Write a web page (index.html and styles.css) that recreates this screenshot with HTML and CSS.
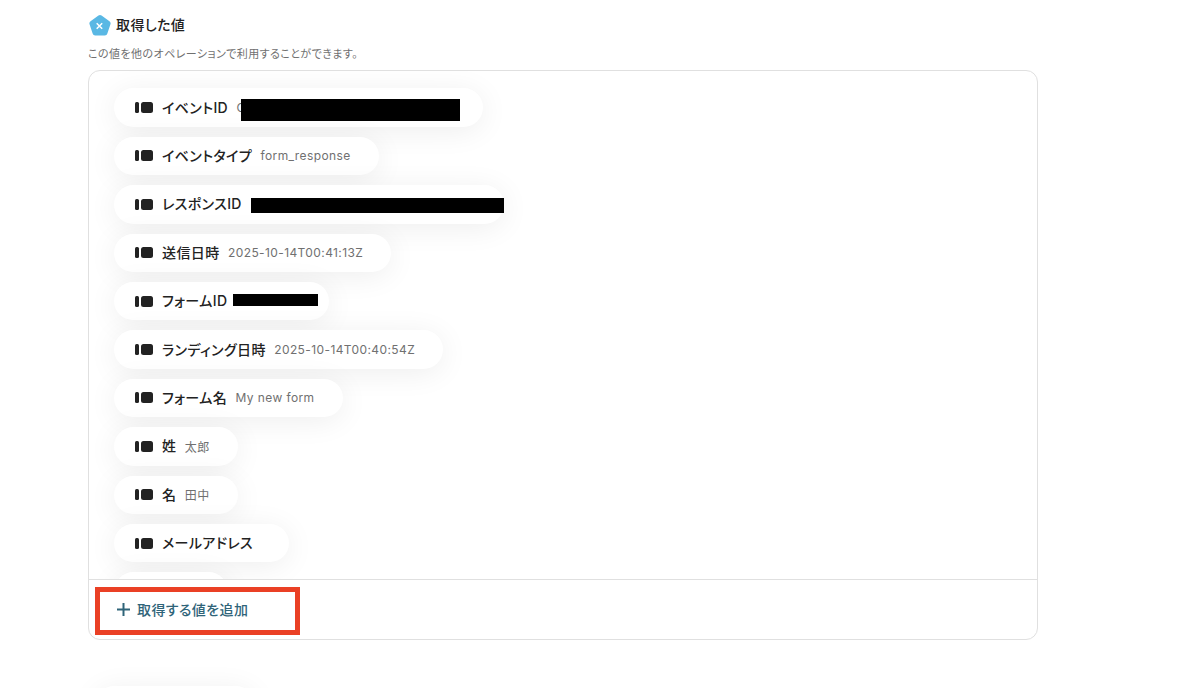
FILE: index.html
```html
<!DOCTYPE html>
<html lang="ja">

<head>
    <meta charset="UTF-8">
    <title>取得した値</title>
    <link rel="stylesheet" href="styles.css">
</head>

<body>
    <div class="container">
        <header class="heading">
            <svg class="heading-icon" viewBox="1 0 20 20" width="22" height="22">
                <path d="M9.6 1.4a2.4 2.4 0 0 1 2.8 0l7.2 5.2a2.4 2.4 0 0 1 .9 2.7l-2.8 8.5a2.4 2.4 0 0 1-2.3 1.7H6.6a2.4 2.4 0 0 1-2.3-1.7L1.5 9.3a2.4 2.4 0 0 1 .9-2.7z" fill="#5ab8e4"/>
                <path d="M8 8.4l5 5M13 8.4l-5 5" stroke="#fff" stroke-width="1.4" fill="none"/>
            </svg>
            <h2>取得した値</h2>
        </header>
        <p class="note">この値を他のオペレーションで利用することができます。</p>

        <section class="card">
            <div class="list">
                <div class="pill pill-event">
                    <svg class="pill-icon" viewBox="0 0 18 11" width="18" height="11"><rect x="0" y="0" width="4" height="11" rx="1.5"/><rect x="6" y="0" width="12" height="11" rx="2.5"/></svg>
                    <span class="name">イベントID</span><span class="value">C</span>
                    <i class="redact redact-event"></i>
                </div>
                <div class="pill">
                    <svg class="pill-icon" viewBox="0 0 18 11" width="18" height="11"><rect x="0" y="0" width="4" height="11" rx="1.5"/><rect x="6" y="0" width="12" height="11" rx="2.5"/></svg>
                    <span class="name">イベントタイプ</span><span class="value">form_response</span>
                </div>
                <div class="pill pill-response">
                    <svg class="pill-icon" viewBox="0 0 18 11" width="18" height="11"><rect x="0" y="0" width="4" height="11" rx="1.5"/><rect x="6" y="0" width="12" height="11" rx="2.5"/></svg>
                    <span class="name">レスポンスID</span>
                    <i class="redact redact-response"></i>
                </div>
                <div class="pill">
                    <svg class="pill-icon" viewBox="0 0 18 11" width="18" height="11"><rect x="0" y="0" width="4" height="11" rx="1.5"/><rect x="6" y="0" width="12" height="11" rx="2.5"/></svg>
                    <span class="name">送信日時</span><span class="value">2025-10-14T00:41:13Z</span>
                </div>
                <div class="pill pill-form">
                    <svg class="pill-icon" viewBox="0 0 18 11" width="18" height="11"><rect x="0" y="0" width="4" height="11" rx="1.5"/><rect x="6" y="0" width="12" height="11" rx="2.5"/></svg>
                    <span class="name">フォームID</span>
                    <i class="redact redact-form"></i>
                </div>
                <div class="pill">
                    <svg class="pill-icon" viewBox="0 0 18 11" width="18" height="11"><rect x="0" y="0" width="4" height="11" rx="1.5"/><rect x="6" y="0" width="12" height="11" rx="2.5"/></svg>
                    <span class="name">ランディング日時</span><span class="value">2025-10-14T00:40:54Z</span>
                </div>
                <div class="pill">
                    <svg class="pill-icon" viewBox="0 0 18 11" width="18" height="11"><rect x="0" y="0" width="4" height="11" rx="1.5"/><rect x="6" y="0" width="12" height="11" rx="2.5"/></svg>
                    <span class="name">フォーム名</span><span class="value">My new form</span>
                </div>
                <div class="pill">
                    <svg class="pill-icon" viewBox="0 0 18 11" width="18" height="11"><rect x="0" y="0" width="4" height="11" rx="1.5"/><rect x="6" y="0" width="12" height="11" rx="2.5"/></svg>
                    <span class="name">姓</span><span class="value">太郎</span>
                </div>
                <div class="pill">
                    <svg class="pill-icon" viewBox="0 0 18 11" width="18" height="11"><rect x="0" y="0" width="4" height="11" rx="1.5"/><rect x="6" y="0" width="12" height="11" rx="2.5"/></svg>
                    <span class="name">名</span><span class="value">田中</span>
                </div>
                <div class="pill pill-mail">
                    <svg class="pill-icon" viewBox="0 0 18 11" width="18" height="11"><rect x="0" y="0" width="4" height="11" rx="1.5"/><rect x="6" y="0" width="12" height="11" rx="2.5"/></svg>
                    <span class="name">メールアドレス</span>
                </div>
                <div class="pill pill-cut"></div>
            </div>
            <footer class="card-footer">
                <div class="add-box">
                    <svg class="plus" viewBox="0 0 13 13" width="13" height="13"><path d="M6.5 0v13M0 6.5h13" stroke="#2f6479" stroke-width="2" fill="none"/></svg>
                    <span>取得する値を追加</span>
                </div>
            </footer>
        </section>

        <div class="next-pill"></div>
    </div>
</body>

</html>
```

FILE: styles.css
```css
* {
    margin: 0;
    padding: 0;
    box-sizing: border-box;
}

html,
body {
    height: 100%;
    overflow: hidden;
    background: #fff;
}

body {
    font-family: Inter, "Noto Sans CJK JP", sans-serif;
    font-feature-settings: "palt";
    color: #222;
}

.container {
    width: 950px;
    margin-left: 88px;
    padding-top: 14px;
}

.heading {
    display: flex;
    align-items: center;
    gap: 5px;
    height: 22px;
    padding-left: 1px;
}

.heading h2 {
    font-size: 14px;
    font-weight: 500;
    line-height: 22px;
    letter-spacing: 0.4px;
}

.note {
    margin-top: 10px;
    font-size: 11px;
    line-height: 16px;
    letter-spacing: 0.43px;
    color: #707070;
}

.card {
    margin-top: 8px;
    height: 570px;
    border: 1px solid #e0e0e0;
    border-radius: 12px;
    display: flex;
    flex-direction: column;
    overflow: hidden;
}

.list {
    flex: none;
    height: 508px;
    overflow: hidden;
    padding: 17.4px 0 0 25px;
    display: flex;
    flex-direction: column;
    align-items: flex-start;
    gap: 10px;
}

.pill {
    flex: none;
    position: relative;
    display: flex;
    align-items: center;
    height: 38.4px;
    padding: 0 28px 0 21px;
    border-radius: 20px;
    background: #fff;
    box-shadow: 0 4px 30px rgba(0, 0, 0, 0.07);
}

.pill-icon {
    flex: none;
    margin-right: 9px;
    fill: #222;
}

.name {
    padding-bottom: 2px;
    font-size: 14px;
    font-weight: 500;
    letter-spacing: 0.4px;
    white-space: nowrap;
}

.value {
    margin-left: 8.4px;
    font-size: 12px;
    letter-spacing: 0.4px;
    color: #707070;
    white-space: nowrap;
}

.redact {
    position: absolute;
    background: #000;
}

.redact-event {
    left: 127px;
    top: 11px;
    width: 219px;
    height: 22px;
}

.redact-response {
    left: 137px;
    top: 13px;
    width: 253px;
    height: 15px;
}

.redact-form {
    left: 119px;
    top: 12px;
    width: 85px;
    height: 12px;
}

.pill-event {
    width: 369px;
}

.pill-response {
    width: 390px;
}

.pill-form {
    width: 215px;
}

.pill-mail {
    width: 175px;
}

.pill-cut {
    width: 114px;
}

.card-footer {
    flex: 1;
    border-top: 1px solid #e0e0e0;
    padding: 7px 0 0 6px;
}

.add-box {
    display: flex;
    align-items: center;
    gap: 7px;
    width: 205px;
    height: 48px;
    padding: 0 0 4px 17px;
    border: 5px solid #ea4025;
    font-size: 14px;
    font-weight: 500;
    letter-spacing: 0.4px;
    color: #2f6479;
}

.plus {
    flex: none;
}

.next-pill {
    width: 160px;
    height: 38px;
    margin: 46px 0 0 7px;
    border-radius: 20px;
    background: #fff;
    box-shadow: 0 4px 30px rgba(0, 0, 0, 0.07);
}
```
